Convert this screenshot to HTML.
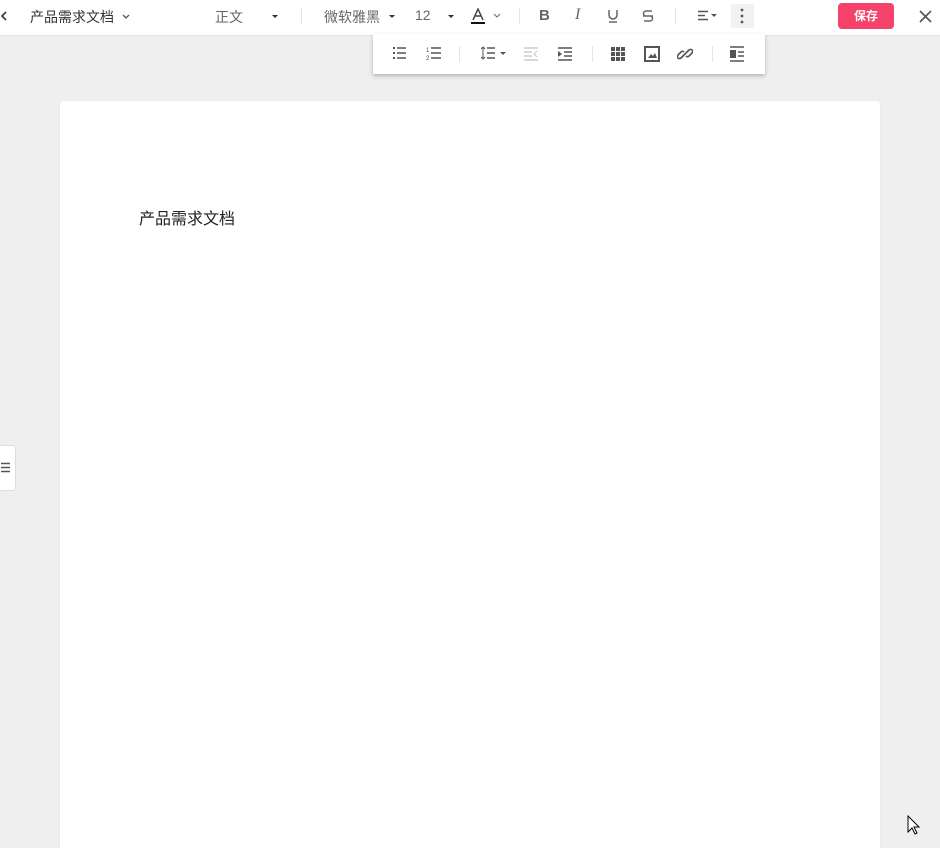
<!DOCTYPE html>
<html style="width:940px;height:848px;overflow:hidden"><head><meta charset="utf-8"><style>
*{margin:0;padding:0;box-sizing:border-box}
body{width:940px;height:848px;overflow:hidden;background:#efefef;font-family:"Liberation Sans","Noto Sans CJK SC",sans-serif;position:relative}
.top{position:absolute;left:0;top:0;width:940px;height:36px;background:#fff;border-bottom:1px solid #e2e2e2}
.t{position:absolute;font-size:14px;color:#333;top:7px;white-space:nowrap}
.g{color:#666}
.sep{position:absolute;top:8px;width:1px;height:16px;background:#e5e5e5}
svg{position:absolute}
.tb{position:absolute;left:373px;top:34px;width:392px;height:40px;background:#fff;box-shadow:0 2px 4px rgba(0,0,0,.25)}
.page{position:absolute;left:60px;top:101px;width:820px;height:747px;background:#fff;border-radius:3px 3px 0 0;box-shadow:0 0 2px rgba(0,0,0,.06)}
.save{position:absolute;left:838px;top:3px;width:56px;height:26px;background:#f5426a;border-radius:4px;color:#fff;font-size:12px;font-weight:bold;text-align:center;line-height:26px}
.side{position:absolute;left:-4px;top:445px;width:20px;height:46px;background:#fff;border:1px solid #ddd;border-radius:3px}
</style></head><body>
<div class="top">
<svg style="left:0;top:10px" width="8" height="12"><path d="M6 2L2 6l4 4" stroke="#333" stroke-width="1.6" fill="none"/></svg>
<div class="t" style="left:30px">产品需求文档</div>
<svg style="left:122px;top:14px" width="8" height="6"><path d="M1 1l3 3 3-3" stroke="#555" stroke-width="1.3" fill="none"/></svg>
<div class="t g" style="left:215px">正文</div>
<svg style="left:271px;top:14px" width="8" height="5"><path d="M1 1h6L4 4z" fill="#333"/></svg>
<div class="sep" style="left:301px"></div>
<div class="t g" style="left:324px">微软雅黑</div>
<svg style="left:388px;top:14px" width="8" height="5"><path d="M1 1h6L4 4z" fill="#333"/></svg>
<div class="t g" style="left:415px">12</div>
<svg style="left:447px;top:14px" width="8" height="5"><path d="M1 1h6L4 4z" fill="#333"/></svg>
<svg style="left:470px;top:8px" width="16" height="18"><path d="M3 12L8 1l5 11M5 8h6" stroke="#444" stroke-width="1.5" fill="none"/><rect x="1" y="14" width="14" height="2" fill="#111"/></svg>
<svg style="left:493px;top:13px" width="8" height="6"><path d="M1 1l3 3 3-3" stroke="#777" stroke-width="1.2" fill="none"/></svg>
<div class="sep" style="left:519px"></div>
<div class="t" style="left:539px;top:7px;font-weight:bold;color:#666;font-size:15px">B</div>
<div class="t" style="left:575px;top:6px;font-style:italic;color:#666;font-size:16px;font-family:'Liberation Serif',serif">I</div>
<svg style="left:607px;top:9px" width="12" height="14"><path d="M2 1v5a4 4 0 008 0V1M2 13h8" stroke="#666" stroke-width="1.5" fill="none"/></svg>
<svg style="left:642px;top:9px" width="12" height="14"><path d="M10 2H4a2.5 2.5 0 000 5h4a2.5 2.5 0 010 5H2M1 7h10" stroke="#666" stroke-width="1.5" fill="none"/></svg>
<div class="sep" style="left:675px"></div>
<svg style="left:697px;top:10px" width="24" height="12"><path d="M1 1.5h10M1 5.5h7M1 9.5h10" stroke="#555" stroke-width="1.5"/><path d="M14 4h6l-3 3z" fill="#555"/></svg>
<div style="position:absolute;left:731px;top:4px;width:23px;height:24px;background:#f2f2f2"></div>
<svg style="left:740px;top:8px" width="4" height="16"><circle cx="2" cy="2" r="1.4" fill="#555"/><circle cx="2" cy="8" r="1.4" fill="#555"/><circle cx="2" cy="14" r="1.4" fill="#555"/></svg>
<div class="save">保存</div>
<svg style="left:919px;top:10px" width="13" height="13"><path d="M1 1l11 11M12 1L1 12" stroke="#555" stroke-width="1.6"/></svg>
</div>
<div class="tb">
<svg style="left:19px;top:12px" width="16" height="16"><path d="M1 2h2M1 7h2M1 12h2" stroke="#555" stroke-width="2"/><path d="M5 2h9M5 7h9M5 12h9" stroke="#555" stroke-width="1.5"/></svg>
<svg style="left:53px;top:11px" width="16" height="18"><text x="0" y="7" font-size="6" fill="#555" font-family="Liberation Sans">1</text><text x="0" y="15" font-size="6" fill="#555" font-family="Liberation Sans">2</text><path d="M5 3h10M5 8h10M5 13h10" stroke="#555" stroke-width="1.5"/></svg>
<div style="position:absolute;left:86px;top:12px;width:1px;height:16px;background:#e5e5e5"></div>
<svg style="left:108px;top:12px" width="28" height="16"><path d="M2 1v12M0 3l2-2 2 2M0 11l2 2 2-2" stroke="#555" stroke-width="1" fill="none"/><path d="M6 2h8M6 7h8M6 12h8" stroke="#555" stroke-width="1.5"/><path d="M19 6h6l-3 3z" fill="#555"/></svg>
<svg style="left:150px;top:12px" width="16" height="16"><path d="M1 2h14M1 6h8M1 10h8M1 14h14" stroke="#ccc" stroke-width="1.5"/><path d="M14 5l-3 3 3 3" stroke="#ccc" stroke-width="1.2" fill="none"/></svg>
<svg style="left:184px;top:12px" width="16" height="16"><path d="M1 2h14M7 6h8M7 10h8M1 14h14" stroke="#555" stroke-width="1.5"/><path d="M1 5l4 3-4 3z" fill="#555"/></svg>
<div style="position:absolute;left:219px;top:12px;width:1px;height:16px;background:#e5e5e5"></div>
<svg style="left:237px;top:12px" width="16" height="16"><rect x="1" y="1" width="14" height="14" fill="#555"/><path d="M5.5 1v14M10.5 1v14M1 5.5h14M1 10.5h14" stroke="#fff" stroke-width="1"/></svg>
<svg style="left:271px;top:12px" width="16" height="16"><rect x="1" y="1" width="14" height="14" fill="none" stroke="#555" stroke-width="2"/><path d="M4 12l3-4 2 2 2-3 2 5z" fill="#555"/></svg>
<svg style="left:304px;top:12px" width="16" height="16"><path d="M7 9l-3 3a2 2 0 01-3-3l3-3a2 2 0 013 0M9 7l3-3a2 2 0 013 3l-3 3a2 2 0 01-3 0M5.5 10.5l5-5" stroke="#555" stroke-width="1.6" fill="none"/></svg>
<div style="position:absolute;left:339px;top:12px;width:1px;height:16px;background:#e5e5e5"></div>
<svg style="left:356px;top:12px" width="16" height="16"><path d="M1 1h14M1 15h14M9 6h6M9 10h6" stroke="#555" stroke-width="1.5"/><rect x="1" y="4" width="6" height="8" fill="#555"/></svg>
</div>
<div class="page"><div style="position:absolute;left:79px;top:104px;font-size:16px;color:#222">产品需求文档</div></div>
<div class="side"><svg style="left:4px;top:16px" width="10" height="12"><path d="M0 1.5h9M0 5.5h9M0 9.5h9" stroke="#555" stroke-width="1.5"/></svg></div>
<svg style="left:907px;top:815px" width="14" height="22"><path d="M1 1v16l4-4 3 6 2-1-3-6h5z" fill="#fff" stroke="#000" stroke-width="1"/></svg>
</body></html>
